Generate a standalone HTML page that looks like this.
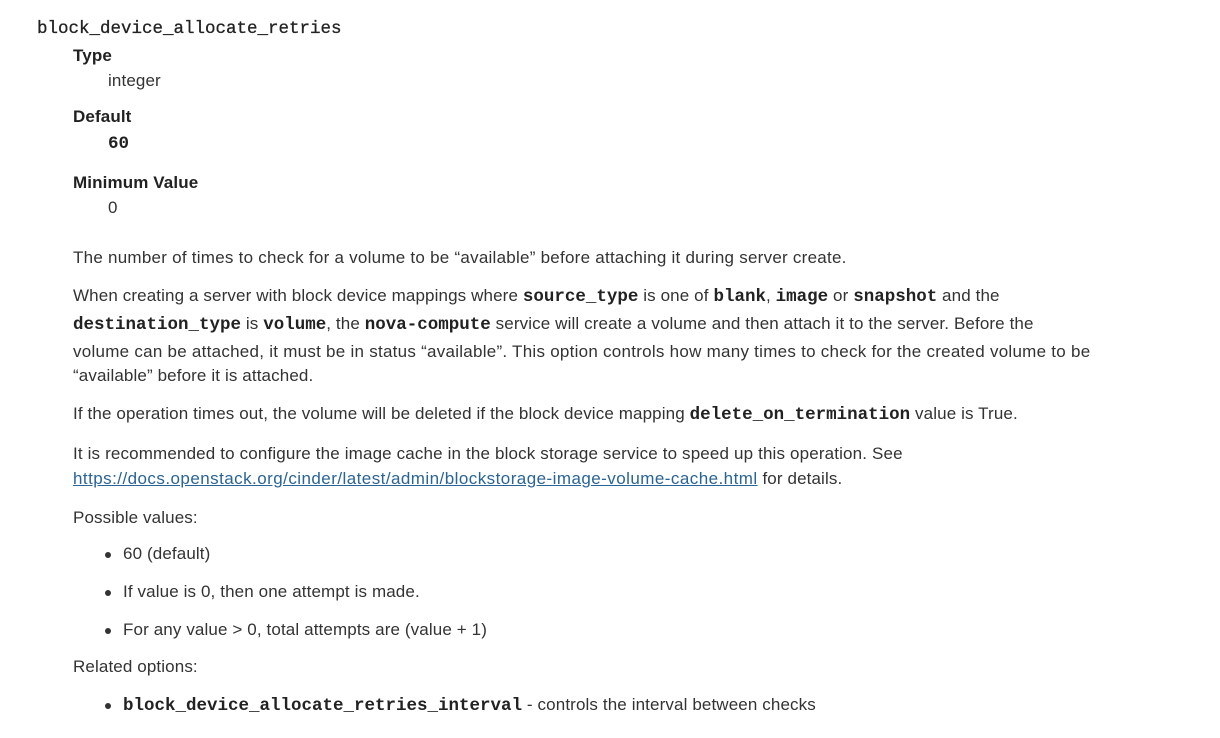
<!DOCTYPE html>
<html><head><style>
body{margin:0;width:1220px;height:738px;background:#fff;color:#333;font-family:"Liberation Sans",sans-serif;font-size:17px;position:relative;overflow:hidden}
.l{position:absolute;white-space:nowrap;line-height:20px;letter-spacing:0.12px}
code{font-family:"Liberation Mono",monospace;font-weight:bold;font-size:17.5px;color:#222;letter-spacing:0}
b{font-weight:bold;color:#222}
a{color:#2a6496;text-decoration:underline;letter-spacing:0.45px}
.dot{position:absolute;width:6px;height:6px;border-radius:50%;background:#333}
</style></head><body>
<div class="l" style="left:37px;top:18px"><code style="font-weight:normal;font-size:17.5px;color:#222;-webkit-text-stroke:0.3px #222">block_device_allocate_retries</code></div>
<div class="l" style="left:73px;top:46px"><b>Type</b></div>
<div class="l" style="left:108px;top:71px">integer</div>
<div class="l" style="left:73px;top:107px"><b>Default</b></div>
<div class="l" style="left:108px;top:133px"><code>60</code></div>
<div class="l" style="left:73px;top:173px"><b>Minimum Value</b></div>
<div class="l" style="left:108px;top:198px">0</div>
<div class="l" style="left:73px;top:248px;letter-spacing:0.25px">The number of times to check for a volume to be “available” before attaching it during server create.</div>
<div class="l" style="left:73px;top:286px">When creating a server with block device mappings where <code>source_type</code> is one of <code>blank</code>, <code>image</code> or <code>snapshot</code> and the</div>
<div class="l" style="left:73px;top:314px"><code>destination_type</code> is <code>volume</code>, the <code>nova-compute</code> service will create a volume and then attach it to the server. Before the</div>
<div class="l" style="left:73px;top:342px;letter-spacing:0.26px">volume can be attached, it must be in status “available”. This option controls how many times to check for the created volume to be</div>
<div class="l" style="left:73px;top:366px">“available” before it is attached.</div>
<div class="l" style="left:73px;top:404px">If the operation times out, the volume will be deleted if the block device mapping <code>delete_on_termination</code> value is True.</div>
<div class="l" style="left:73px;top:444px;letter-spacing:0.15px">It is recommended to configure the image cache in the block storage service to speed up this operation. See</div>
<div class="l" style="left:73px;top:469px"><a>https://docs.openstack.org/cinder/latest/admin/blockstorage-image-volume-cache.html</a> for details.</div>
<div class="l" style="left:73px;top:508px">Possible values:</div>
<div class="dot" style="left:105px;top:552px"></div><div class="l" style="left:123px;top:544px">60 (default)</div>
<div class="dot" style="left:105px;top:590px"></div><div class="l" style="left:123px;top:582px">If value is 0, then one attempt is made.</div>
<div class="dot" style="left:105px;top:628px"></div><div class="l" style="left:123px;top:620px">For any value &gt; 0, total attempts are (value + 1)</div>
<div class="l" style="left:73px;top:657px">Related options:</div>
<div class="dot" style="left:105px;top:703px"></div><div class="l" style="left:123px;top:695px"><code>block_device_allocate_retries_interval</code> - controls the interval between checks</div>
</body></html>
